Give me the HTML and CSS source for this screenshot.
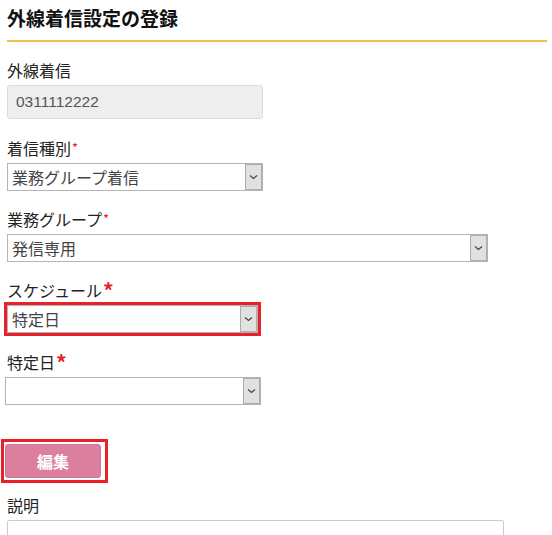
FILE: index.html
```html
<!DOCTYPE html>
<html lang="ja">
<head>
    <meta charset="UTF-8">
    <meta name="viewport" content="width=device-width, initial-scale=1.0">
    <title>外線着信設定の登録</title>
    <link rel="stylesheet" href="styles.css">
</head>
<body>
    <main class="page">
        <h2 class="page-title">外線着信設定の登録</h2>

        <!-- 外線着信 -->
        <div class="field">
            <label class="field-label">外線着信</label>
            <input class="text-input" type="text" value="0311112222" disabled>
        </div>

        <div class="field field-type">
            <label class="field-label">着信種別<span class="req">*</span></label>
            <div class="select w-short">
                <span class="select-value">業務グループ着信</span>
                <span class="select-arrow"><svg width="9" height="6" viewBox="0 0 9 6"><path d="M1 1.5l3.5 3 3.5-3" fill="none" stroke="#444" stroke-width="1.2"/></svg></span>
            </div>
        </div>

        <div class="field">
            <label class="field-label">業務グループ<span class="req">*</span></label>
            <div class="select w-long">
                <span class="select-value">発信専用</span>
                <span class="select-arrow"><svg width="9" height="6" viewBox="0 0 9 6"><path d="M1 1.5l3.5 3 3.5-3" fill="none" stroke="#444" stroke-width="1.2"/></svg></span>
            </div>
        </div>

        <div class="field">
            <label class="field-label">スケジュール<span class="req big">*</span></label>
            <div class="select w-mark marked">
                <span class="select-value">特定日</span>
                <span class="select-arrow"><svg width="9" height="6" viewBox="0 0 9 6"><path d="M1 1.5l3.5 3 3.5-3" fill="none" stroke="#444" stroke-width="1.2"/></svg></span>
            </div>
        </div>

        <div class="field field-date">
            <label class="field-label">特定日<span class="req big">*</span></label>
            <div class="select w-date">
                <span class="select-value"></span>
                <span class="select-arrow"><svg width="9" height="6" viewBox="0 0 9 6"><path d="M1 1.5l3.5 3 3.5-3" fill="none" stroke="#444" stroke-width="1.2"/></svg></span>
            </div>
        </div>

        <div class="btn-mark">
            <button class="btn-edit">編集</button>
        </div>

        <div class="field field-desc">
            <label class="field-label">説明</label>
            <textarea class="desc"></textarea>
        </div>
    </main>
</body>
</html>
```

FILE: styles.css
```css
body {
    margin: 0;
    padding: 0;
    background: #fff;
    color: #222;
    font-family: "Noto Sans CJK JP", "Liberation Sans", sans-serif;
    font-size: 16px;
    overflow: hidden;
}
.page {
    padding: 0 5px 0 7px;
}
.page-title {
    margin: 0;
    padding: 6px 0 10px;
    font-size: 19px;
    line-height: 24px;
    font-weight: bold;
    color: #111;
    border-bottom: 2px solid #eec14d;
}
.field {
    margin-top: 18px;
}
.field.field-type,
.field.field-date {
    margin-top: 19px;
}
.field-label {
    display: block;
    height: 20px;
    line-height: 20px;
    margin-bottom: 5px;
}
.req {
    color: #e8202a;
    font-size: 13px;
    line-height: 0;
    margin-left: 1px;
    vertical-align: 2px;
}
.req.big {
    font-size: 21px;
    font-weight: bold;
    vertical-align: -2px;
}
.text-input {
    box-sizing: border-box;
    display: block;
    width: 256px;
    height: 34px;
    padding: 0 8px;
    border: 1px solid #dcdcdc;
    border-radius: 3px;
    background: #eee;
    color: #555;
    font-family: "Liberation Sans", Arial, sans-serif;
    font-size: 15.5px;
}
.select {
    box-sizing: border-box;
    display: flex;
    align-items: stretch;
    height: 28px;
    border: 1px solid #b4b4b4;
    background: #fff;
}
.select-value {
    flex: 1;
    padding-left: 4px;
    line-height: 26px;
    color: #444;
}
.select-arrow {
    box-sizing: border-box;
    width: 17px;
    border: 1px solid #adadad;
    background: #e1e1e1;
    display: flex;
    align-items: center;
    justify-content: center;
}
.w-short { width: 256px; }
.w-long { width: 481px; }
.w-mark { width: 251px; }
.w-date { width: 256px; margin-left: -2px; }
.marked {
    outline: 3px solid #e8202a;
}
.btn-mark {
    display: inline-block;
    margin: 34px 0 0 -6px;
    padding: 2px 4px 2px 1px;
    border: 3px solid #e8202a;
}
.btn-edit {
    display: block;
    width: 96px;
    height: 34px;
    background: #dc7f9f;
    border: 1px solid #d0769a;
    border-radius: 3px;
    color: #fff;
    font-family: "Noto Sans CJK JP", sans-serif;
    font-size: 16px;
    font-weight: bold;
    cursor: pointer;
}
.field.field-desc {
    margin-top: 12px;
}
.desc {
    box-sizing: border-box;
    display: block;
    width: 497px;
    height: 60px;
    border: 1px solid #ccc;
    border-radius: 2px;
    resize: none;
}
```
